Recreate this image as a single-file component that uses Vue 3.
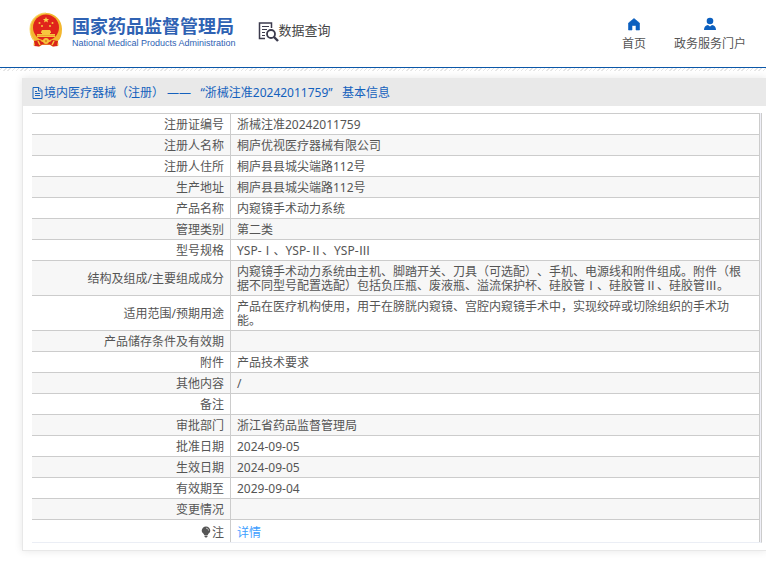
<script setup>
const rows = [
  { label: '注册证编号', value: '浙械注准20242011759' },
  { label: '注册人名称', value: '桐庐优视医疗器械有限公司' },
  { label: '注册人住所', value: '桐庐县县城尖端路112号' },
  { label: '生产地址', value: '桐庐县县城尖端路112号' },
  { label: '产品名称', value: '内窥镜手术动力系统' },
  { label: '管理类别', value: '第二类' },
  { label: '型号规格', value: 'YSP-Ⅰ、YSP-Ⅱ、YSP-Ⅲ' },
  {
    label: '结构及组成/主要组成成分',
    value:
      '内窥镜手术动力系统由主机、脚踏开关、刀具（可选配）、手机、电源线和附件组成。附件（根据不同型号配置选配）包括负压瓶、废液瓶、溢流保护杯、硅胶管Ⅰ、硅胶管Ⅱ、硅胶管Ⅲ。',
  },
  {
    label: '适用范围/预期用途',
    value: '产品在医疗机构使用，用于在膀胱内窥镜、宫腔内窥镜手术中，实现绞碎或切除组织的手术功能。',
  },
  { label: '产品储存条件及有效期', value: '' },
  { label: '附件', value: '产品技术要求' },
  { label: '其他内容', value: '/' },
  { label: '备注', value: '' },
  { label: '审批部门', value: '浙江省药品监督管理局' },
  { label: '批准日期', value: '2024-09-05' },
  { label: '生效日期', value: '2024-09-05' },
  { label: '有效期至', value: '2029-09-04' },
  { label: '变更情况', value: '' },
]
</script>

<template>
  <div class="page">
    <header class="header">
      <a class="brand" href="#">
        <svg class="emblem" viewBox="0 0 34 36" aria-hidden="true">
          <path d="M17 1C8 1 1 8 1 17c0 6 1.500 10 4 12l-.5 4.500 6 1 2.500-1.500h8l2.500 1.500 6-1L29 29c2.500-2 4-6 4-12C33 8 26 1 17 1z" fill="#f3b72f" />
          <path d="M17 1C8 1 1 8 1 17c0 5 2 9 4 11" fill="none" stroke="#f8d765" stroke-width="1" />
          <circle cx="17" cy="15.500" r="13" fill="#e0241b" />
          <path d="M5 29l6-1 2 2h8l2-2 6 1-1 4 1 1-5 .5-3-2h-8l-3 2-5-.5 1-1z" fill="#d9231a" />
          <path d="M17 5l.9 2h2.200l-1.700 1.400.6 2.100L17 9.300l-2 1.200.6-2.100L13.900 7h2.200z" fill="#fbd44b" />
          <g fill="#f7c53e">
            <circle cx="10.500" cy="11" r="1" />
            <circle cx="13" cy="14" r="1" />
            <circle cx="21" cy="14" r="1" />
            <circle cx="23.500" cy="11" r="1" />
            <path d="M12 20l1-2h8l1 2v1h-1v1h5v3H8v-3h5v-1h-1z" />
            <circle cx="17" cy="29" r="3" />
          </g>
          <path d="M8 23.500h18" stroke="#e88a25" stroke-width=".6" />
          <circle cx="17" cy="29" r="1.200" fill="#e88a25" />
          <path d="M9 29l2 4M25 29l-2 4" stroke="#f7c53e" stroke-width="1.500" />
        </svg>
        <span class="brand-text">
          <span class="brand-zh">国家药品监督管理局</span>
          <span class="brand-en">National Medical Products Administration</span>
        </span>
      </a>
      <div class="section">
        <svg class="section-icon" viewBox="0 0 21 20" aria-hidden="true">
          <g fill="none" stroke="#3c3b4d">
            <path d="M7 16.500H1.500V1H13.500V6" stroke-width="1.500" />
            <path d="M4 4.500h7M4 7.500h5M4 10.500h3M4 13.500h3" />
            <circle cx="13" cy="12" r="4" stroke-width="1.800" />
            <path d="M16 15l4 4" stroke-width="2.400" />
          </g>
        </svg>
        <span>数据查询</span>
      </div>
      <nav class="nav">
        <a href="#">
          <svg viewBox="0 0 14 14" aria-hidden="true">
            <path d="M7 1.500l5.500 4.500v7H9V8.500H5V13H1.500V6z" fill="#0b5fbf" stroke="#0b5fbf" stroke-width=".6" stroke-linejoin="round" />
          </svg>
          <span>首页</span>
        </a>
        <a href="#">
          <svg viewBox="0 0 14 14" aria-hidden="true">
            <circle cx="7" cy="4" r="3.300" fill="#0b5fbf" />
            <path d="M1 13c0-3 1.500-4.500 4-5l2 1.600L9 8c2.500.5 4 2 4 5z" fill="#0b5fbf" />
          </svg>
          <span>政务服务门户</span>
        </a>
      </nav>
    </header>
    <div class="hatch"></div>

    <main class="card">
      <h1 class="title">
        <svg class="doc" viewBox="0 0 11 12" aria-hidden="true">
          <path d="M1 .5h6l3 3v8H1zM6.500 1v3H10M3 6.500h5M3 8.500h5M3 4.500h2" fill="none" stroke="#1a66bd" />
        </svg>
        <span>境内医疗器械（注册） ——&nbsp; &nbsp;“浙械注准20242011759”&nbsp; &nbsp;基本信息</span>
      </h1>
      <div class="table-wrap">
        <table class="info">
          <tbody>
            <tr v-for="row in rows" :key="row.label">
              <th scope="row">{{ row.label }}</th>
              <td>{{ row.value }}</td>
            </tr>
            <tr class="note">
              <th scope="row">
                <svg class="bulb" viewBox="0 0 10 12" aria-hidden="true">
                  <path d="M5 .5A4.300 4.300 0 0 0 .7 4.800C.7 7 3 7.500 3.200 9h3.600C7 7.500 9.300 7 9.300 4.800A4.300 4.300 0 0 0 5 .5zM3.500 9.500h3v1.200L5.500 11.500h-1l-1-.8z" fill="#555" />
                  <path d="M5 2.200c1.600 0 2.500 1 2.500 2.300" fill="none" stroke="#ddd" stroke-width=".8" />
                </svg>注
              </th>
              <td><a href="#">详情</a></td>
            </tr>
          </tbody>
        </table>
      </div>
    </main>
  </div>
</template>

<style>
body {
  background: #fff;
}
</style>

<style scoped>
.page {
  font-family: "Noto Sans", "Noto Sans CJK SC", sans-serif;
  font-size: 12px;
  line-height: 14px;
  color: #555;
  overflow: hidden;
  padding-bottom: 10px;
  text-spacing-trim: space-all;
}
a {
  color: inherit;
  text-decoration: none;
}
.header {
  display: flex;
  align-items: flex-start;
  box-sizing: border-box;
  height: 68px;
  padding: 12px 20px 0 29px;
  border-bottom: 1px solid #0b57a8;
}
.brand {
  display: flex;
  gap: 9px;
  color: #2f62b3;
}
.emblem {
  width: 34px;
  height: 36px;
}
.brand-text {
  display: flex;
  flex-direction: column;
  padding-top: 3px;
  white-space: nowrap;
}
.brand-zh {
  font: 700 18px/21px "Noto Sans CJK SC", sans-serif;
}
.brand-en {
  font: 9px/15px "Liberation Sans", sans-serif;
}
.section {
  display: flex;
  margin-left: 22px;
  padding-top: 10px;
  font: 13px/16px "Noto Sans CJK SC", sans-serif;
  color: #444;
  white-space: nowrap;
}
.section-icon {
  width: 21px;
  height: 20px;
}
.nav {
  display: flex;
  gap: 28px;
  margin-left: auto;
  padding-top: 5px;
}
.nav a {
  display: flex;
  flex-direction: column;
  align-items: center;
  gap: 6px;
  white-space: nowrap;
}
.nav svg {
  width: 14px;
  height: 14px;
}
.hatch {
  height: 3px;
  background: repeating-linear-gradient(135deg, #fff 0 1px, #e6e6e6 1px 2px, #fff 2px 3px);
}
.card {
  margin: 7px 0 0 22px;
  padding-bottom: 7px;
  border: 1px solid #e8e8e8;
  border-width: 0 0 1px 1px;
  box-shadow: 0 0 8px rgba(0, 0, 0, 0.1);
  background: #fff;
}
.title {
  display: flex;
  align-items: center;
  gap: 1px;
  margin: 0;
  padding: 8px 9px 6px;
  background: #e9e9e9;
  color: #1461bd;
  font-size: 12px;
  font-weight: 400;
  line-height: 14px;
}
.doc {
  width: 11px;
  height: 12px;
}
.table-wrap {
  margin: 7px 4px 0 9px;
  border-right: 1px solid #ccc;
  border-bottom: 1px solid #ebeef5;
  background: #f0f0f8;
  padding-right: 1px;
}
.info {
  width: 100%;
  border-collapse: separate;
  border-spacing: 0;
  border-right: 1px solid #ccc;
  background: #fff;
}
.info th,
.info td {
  height: 14px;
  padding: 4px 6px 2px;
  border-top: 1px solid #ccc;
  font-weight: 400;
}
.info th {
  width: 186px;
  border-right: 1px solid #ccc;
  text-align: right;
}
.info td {
  padding-right: 14px;
}
.info tr:nth-child(even) {
  background: #f7f7f7;
}
.info .note th,
.info .note td {
  padding: 6px 6px 2px;
}
.note a {
  color: #409eff;
}
.bulb {
  width: 10px;
  height: 12px;
  margin-right: 1px;
  vertical-align: -1px;
}
</style>
